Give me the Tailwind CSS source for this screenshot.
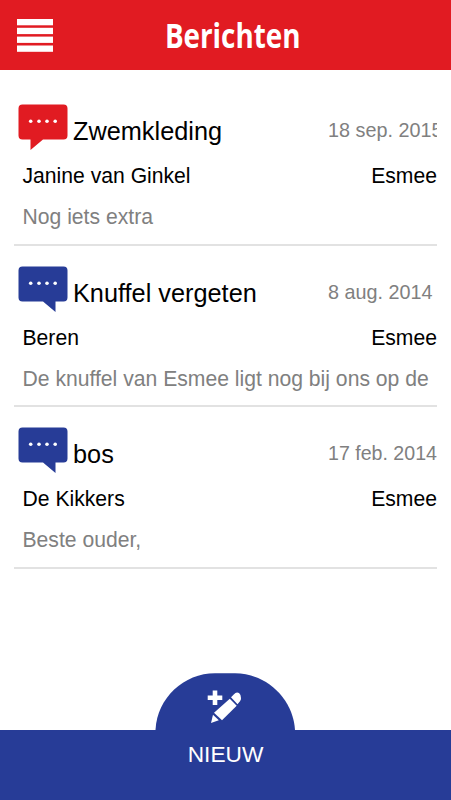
<!DOCTYPE html>
<html lang="nl">
<head>
    <meta charset="UTF-8">
    <meta name="viewport" content="width=device-width, initial-scale=1.0">
    <title>Berichten</title>
    <script src="https://cdn.jsdelivr.net/npm/@tailwindcss/browser@4"></script>
</head>
<body class="bg-white font-['Liberation_Sans',Arial,sans-serif]">
    <div class="flex flex-col h-screen overflow-hidden">
        <!-- Header -->
        <header class="grid grid-cols-[80px_1fr_66px] items-center h-[70px] shrink-0 bg-[#e11b22]">
            <button class="pl-[17px]" aria-label="Menu">
                <svg class="block" width="36" height="36" viewBox="0 0 36 36" fill="#fff">
                    <rect y="2" width="36" height="6.300"/>
                    <rect y="10.800" width="36" height="6.300"/>
                    <rect y="19.600" width="36" height="6.300"/>
                    <rect y="28.500" width="36" height="6.300"/>
                </svg>
            </button>
            <h1 class="flex justify-center text-[33.5px] leading-[70px] font-bold text-white font-['Open_Sans',sans-serif] whitespace-nowrap"><span class="inline-block scale-x-[0.83]">Berichten</span></h1>
        </header>

        <!-- Messages -->
        <main class="flex-1 px-3.5 pt-3.5">
            <article class="h-[162px] border-b-2 border-[#e2e2e2] pt-5 overflow-hidden">
                <div class="flex h-[50px]">
                    <svg class="ml-1 shrink-0" width="50" height="47" viewBox="0 0 50 47">
                        <path fill="#e11b22" d="M4.500.500h41a4 4 0 0 1 4 4v27a4 4 0 0 1-4 4H25L12.500 46V35.500h-8a4 4 0 0 1-4-4v-27a4 4 0 0 1 4-4z"/>
                        <g fill="#fff"><circle cx="12.700" cy="17.300" r="1.800"/><circle cx="21" cy="17.300" r="1.800"/><circle cx="29" cy="17.300" r="1.800"/><circle cx="37.200" cy="17.300" r="1.800"/></g>
                    </svg>
                    <h2 class="ml-[5px] w-[255px] shrink-0 text-[25.3px] leading-[54px]">Zwemkleding</h2>
                    <time class="text-[19.8px] leading-[52px] text-[#808080] whitespace-nowrap">18 sep. 2015</time>
                </div>
                <div class="flex justify-between pl-[8.5px] text-[21.150px] leading-[43px]"><span>Janine van Ginkel</span><span>Esmee</span></div>
                <p class="pl-[8.5px] text-[21.150px] leading-[39px] text-[#808080] whitespace-nowrap">Nog iets extra</p>
            </article>

            <article class="h-[161px] border-b-2 border-[#e2e2e2] pt-5 overflow-hidden">
                <div class="flex h-[50px]">
                    <svg class="ml-1 shrink-0" width="50" height="47" viewBox="0 0 50 47">
                        <path fill="#273c97" d="M4.500.500h41a4 4 0 0 1 4 4v27a4 4 0 0 1-4 4h-8V46L25 35.500H4.500a4 4 0 0 1-4-4v-27a4 4 0 0 1 4-4z"/>
                        <g fill="#fff"><circle cx="12.700" cy="17.300" r="1.800"/><circle cx="21" cy="17.300" r="1.800"/><circle cx="29" cy="17.300" r="1.800"/><circle cx="37.200" cy="17.300" r="1.800"/></g>
                    </svg>
                    <h2 class="ml-[5px] w-[255px] shrink-0 text-[25.3px] leading-[54px]">Knuffel vergeten</h2>
                    <time class="text-[19.8px] leading-[52px] text-[#808080] whitespace-nowrap">8 aug. 2014</time>
                </div>
                <div class="flex justify-between pl-[8.5px] text-[21.150px] leading-[43px]"><span>Beren</span><span>Esmee</span></div>
                <p class="pl-[8.5px] text-[21.150px] leading-[39px] text-[#808080] whitespace-nowrap">De knuffel van Esmee ligt nog bij ons op de</p>
            </article>

            <article class="h-[162px] border-b-2 border-[#e2e2e2] pt-5 overflow-hidden">
                <div class="flex h-[50px]">
                    <svg class="ml-1 shrink-0" width="50" height="47" viewBox="0 0 50 47">
                        <path fill="#273c97" d="M4.500.500h41a4 4 0 0 1 4 4v27a4 4 0 0 1-4 4h-8V46L25 35.500H4.500a4 4 0 0 1-4-4v-27a4 4 0 0 1 4-4z"/>
                        <g fill="#fff"><circle cx="12.700" cy="17.300" r="1.800"/><circle cx="21" cy="17.300" r="1.800"/><circle cx="29" cy="17.300" r="1.800"/><circle cx="37.200" cy="17.300" r="1.800"/></g>
                    </svg>
                    <h2 class="ml-[5px] w-[255px] shrink-0 text-[25.3px] leading-[54px]">bos</h2>
                    <time class="text-[19.6px] leading-[52px] text-[#808080] whitespace-nowrap">17 feb. 2014</time>
                </div>
                <div class="flex justify-between pl-[8.5px] text-[21.150px] leading-[43px]"><span>De Kikkers</span><span>Esmee</span></div>
                <p class="pl-[8.5px] text-[21.150px] leading-[39px] text-[#808080] whitespace-nowrap">Beste ouder,</p>
            </article>
        </main>

        <!-- New message -->
        <footer class="flex flex-col items-center shrink-0">
            <button class="block mr-px" aria-label="Nieuw bericht">
                <svg class="block" width="140" height="57" viewBox="0 0 140 57">
                    <path fill="#273c97" d="M.500 57C2 25 29 .300 60 .300H80C111 .300 138 25 140 57z"/>
                    <g fill="#fff">
                        <path d="M57.700 17.500h4.600v5h5v4.500h-5v5h-4.600v-5h-5v-4.500h5z"/>
                        <path d="M74.800 25.800L81.700 32.700L67 47.200L59 39.800z"/>
                        <path d="M76 24.300L79 21.200Q81 18.800 84 20Q86.300 22 86 25Q86.300 26.500 85 28.300L82.500 31.300z"/>
                        <path d="M58 41.700L63.800 47.200L56 50.100z"/>
                    </g>
                </svg>
            </button>
            <div class="h-[70px] w-full bg-[#273c97] text-center text-[22.700px] leading-[48px] text-white">NIEUW</div>
        </footer>
    </div>
</body>
</html>
